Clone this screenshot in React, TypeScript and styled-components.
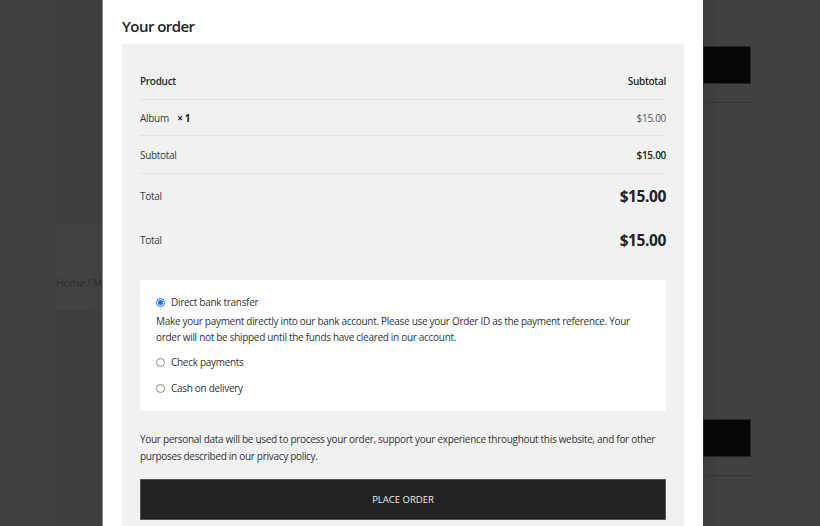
import React from "react";
import styled, { createGlobalStyle } from "styled-components";

const Global = createGlobalStyle`
  html, body { margin: 0; padding: 0; }
  body { font-family: "Open Sans", "Noto Sans", sans-serif; background: #414141; }
`;

const Page = styled.div`
  width: 820px;
  height: 526px;
  overflow: hidden;
  display: flex;
  background: #414141;
`;

const LeftSide = styled.div`
  width: 102px;
  padding-left: 55px;
  box-sizing: border-box;
  display: flex;
  flex-direction: column;
`;

const SideStrip = styled.div<{ $h: number }>`
  height: ${(p) => p.$h}px;
  background: #3d3e40;
  flex-shrink: 0;
`;

const Crumb = styled.div`
  height: 86px;
  width: 35px;
  background: #434343;
  flex-shrink: 0;
  display: flex;
  align-items: center;
  padding-top: 32px;
  padding-left: 1px;
  box-sizing: border-box;
  white-space: nowrap;
  font-size: 10.5px;
  letter-spacing: -0.3px;
  color: #2c2c2c;
  overflow: visible;
`;

const Edge = styled.div`
  width: 1px;
  background: #8a8a8a;
`;

const Modal = styled.div`
  width: 600px;
  background: #fff;
  padding: 0 19px;
  box-sizing: border-box;
  display: flex;
  flex-direction: column;
`;

const Title = styled.h3`
  margin: 0;
  height: 44px;
  padding-top: 16px;
  box-sizing: border-box;
  font-size: 15px;
  letter-spacing: -0.55px;
  font-weight: 600;
  color: #222;
  line-height: 20px;
`;

const OrderBox = styled.div`
  background: #f1f1f1;
  padding: 18px 18px 0;
  flex: 1;
`;

const Row = styled.div<{ $h: number; $line?: boolean }>`
  height: ${(p) => p.$h}px;
  display: flex;
  align-items: center;
  justify-content: space-between;
  border-bottom: ${(p) => (p.$line ? "1px solid #e3e3e3" : "none")};
  font-size: 10px;
  letter-spacing: -0.3px;
  color: #3a3a3a;
`;

const HeadCell = styled.span`
  font-weight: 600;
  color: #2a2a2a;
`;

const Qty = styled.strong`
  font-weight: 700;
  margin-left: 6px;
  color: #222;
`;

const Price = styled.span<{ $big?: boolean; $bold?: boolean }>`
  font-size: ${(p) => (p.$big ? "15.5px" : "10px")};
  letter-spacing: ${(p) => (p.$big ? "-0.4px" : "-0.3px")};
  font-weight: ${(p) => (p.$big ? 700 : p.$bold ? 600 : 400)};
  color: ${(p) => (p.$big || p.$bold ? "#222" : "#555")};
`;

const PayBox = styled.div`
  margin-top: 18px;
  background: #fff;
  padding: 14px 16px 15px 16px;
  display: flex;
  flex-direction: column;
`;

const Method = styled.label<{ $mt?: number }>`
  display: flex;
  align-items: center;
  gap: 6px;
  height: 16px;
  margin-top: ${(p) => p.$mt ?? 0}px;
  font-size: 10px;
  letter-spacing: -0.3px;
  color: #333;
`;

const Radio = styled.span<{ $on?: boolean }>`
  width: 7px;
  height: 7px;
  border-radius: 50%;
  border: 1px solid ${(p) => (p.$on ? "#1a73e8" : "#8a8a8a")};
  background: #fff;
  display: flex;
  align-items: center;
  justify-content: center;
  &::after {
    content: "";
    width: 5px;
    height: 5px;
    border-radius: 50%;
    background: ${(p) => (p.$on ? "#1a73e8" : "transparent")};
  }
`;

const Desc = styled.p`
  margin: 3px 0 0;
  font-size: 10px;
  letter-spacing: -0.3px;
  line-height: 16px;
  color: #333;
`;

const Privacy = styled.p`
  margin: 20px 0 0;
  font-size: 10px;
  letter-spacing: -0.3px;
  line-height: 17px;
  color: #333;
`;

const PlaceButton = styled.button`
  margin-top: 14px;
  width: 100%;
  height: 41px;
  background: #222;
  border: 1px solid #555;
  color: #eee;
  font-family: inherit;
  font-size: 9.5px;
`;

const RightSide = styled.div`
  flex: 1;
  display: flex;
`;

const RightStrip = styled.div`
  width: 13px;
  background: #3d3e40;
`;

const RightCol = styled.div`
  width: 35px;
  display: flex;
  flex-direction: column;
`;

const DarkBtn = styled.div<{ $mt: number }>`
  margin-top: ${(p) => p.$mt}px;
  margin-left: -13px;
  width: 48px;
  height: 38px;
  background: #070707;
  border: 1px solid #252525;
  box-sizing: border-box;
`;

const Rule = styled.div`
  margin-top: 18px;
  margin-left: -13px;
  width: 48px;
  height: 1px;
  background: #363636;
`;

export default function App() {
  return (
    <>
      <Global />
      <Page>
        <LeftSide>
          <SideStrip $h={224} />
          <Crumb>Home / Music</Crumb>
          <SideStrip $h={216} />
        </LeftSide>
        <Edge />
        <Modal>
          <Title>Your order</Title>
          <OrderBox>
            <Row $h={37} $line>
              <HeadCell>Product</HeadCell>
              <HeadCell>Subtotal</HeadCell>
            </Row>
            <Row $h={35} $line>
              <span>
                Album <Qty>× 1</Qty>
              </span>
              <Price>$15.00</Price>
            </Row>
            <Row $h={37} $line>
              <span>Subtotal</span>
              <Price $bold>$15.00</Price>
            </Row>
            <Row $h={44}>
              <span>Total</span>
              <Price $big>$15.00</Price>
            </Row>
            <Row $h={44}>
              <span>Total</span>
              <Price $big>$15.00</Price>
            </Row>
            <PayBox>
              <Method>
                <Radio $on />
                Direct bank transfer
              </Method>
              <Desc>
                Make your payment directly into our bank account. Please use your Order ID as the payment
                reference. Your order will not be shipped until the funds have cleared in our account.
              </Desc>
              <Method $mt={9}>
                <Radio />
                Check payments
              </Method>
              <Method $mt={10}>
                <Radio />
                Cash on delivery
              </Method>
            </PayBox>
            <Privacy>
              Your personal data will be used to process your order, support your experience throughout this
              website, and for other purposes described in our privacy policy.
            </Privacy>
            <PlaceButton>PLACE ORDER</PlaceButton>
          </OrderBox>
        </Modal>
        <RightSide>
          <RightStrip />
          <RightCol>
            <DarkBtn $mt={46} />
            <Rule />
            <DarkBtn $mt={316} />
            <Rule />
          </RightCol>
        </RightSide>
      </Page>
    </>
  );
}
